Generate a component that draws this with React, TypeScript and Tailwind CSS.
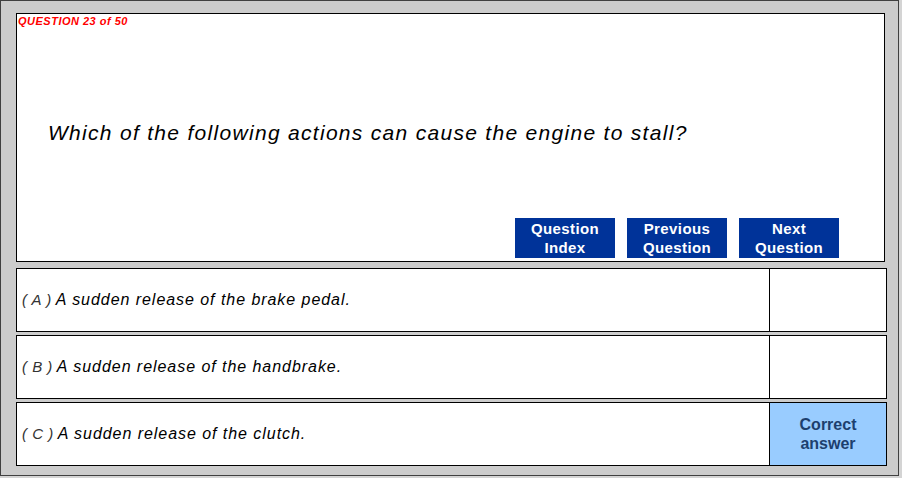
const answers = [
  { letter: "A", text: "A sudden release of the brake pedal.", correct: false },
  { letter: "B", text: "A sudden release of the handbrake.", correct: false },
  { letter: "C", text: "A sudden release of the clutch.", correct: true },
];

const navButtons = [
  ["Question", "Index"],
  ["Previous", "Question"],
  ["Next", "Question"],
];

export default function App() {
  return (
    <div className="w-[902px] h-[478px] bg-[#d4d4d4] font-['Liberation_Sans',Arial,sans-serif]">
      <div className="w-[899px] h-[476px] border border-[#404040] bg-[#cccccc] pl-[15px] pt-[12px] flex flex-col">
        {/* question panel */}
        <div className="w-[869px] h-[249px] border border-black bg-white flex flex-col">
          <div className="pl-[1px] pt-[1px] text-[11px] leading-[13px] font-bold italic tracking-[0.5px] text-[#ff0000]">
            QUESTION 23 of 50
          </div>
          <div className="pl-[31px] pt-[93px] text-[21px] leading-[24px] italic tracking-[1.3px] text-black">
            Which of the following actions can cause the engine to stall?
          </div>
          <div className="flex gap-[12px] pl-[498px] pt-[73px]">
            {navButtons.map((lines, i) => (
              <div
                key={i}
                className="w-[100px] h-[40px] bg-[#003399] text-white text-[15px] leading-[19px] font-bold tracking-[0.4px] flex flex-col items-center justify-center"
              >
                <span>{lines[0]}</span>
                <span>{lines[1]}</span>
              </div>
            ))}
          </div>
        </div>

        {/* answers */}
        <div className="flex flex-col gap-[3px] mt-[6px]">
          {answers.map((a) => (
            <div key={a.letter} className="w-[871px] h-[64px] border border-black bg-white flex">
              <div className="flex-1 flex items-center pl-[5px] text-[16px] italic tracking-[0.95px] text-black">
                <span className="text-[15px] text-[#333333] mr-[4px] tracking-[0.5px]">( {a.letter} )</span>
                <span>{a.text}</span>
              </div>
              <div
                className={
                  a.correct
                    ? "w-[117px] border-l border-black bg-[#99ccff] flex flex-col items-center justify-center text-[16px] leading-[19px] font-bold text-[#1d3f6e]"
                    : "w-[117px] border-l border-black bg-white"
                }
              >
                {a.correct && (
                  <>
                    <span>Correct</span>
                    <span>answer</span>
                  </>
                )}
              </div>
            </div>
          ))}
        </div>
      </div>
    </div>
  );
}
